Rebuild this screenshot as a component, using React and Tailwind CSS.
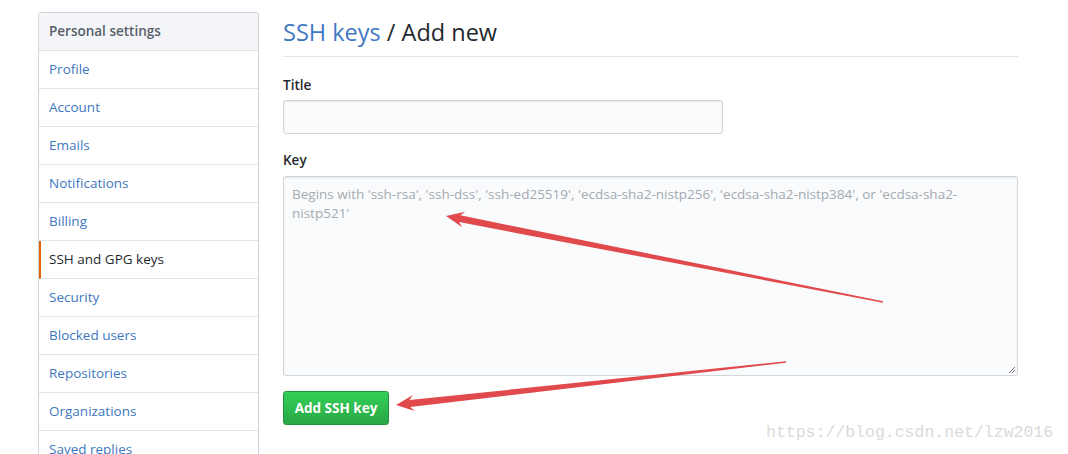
export default function App() {
  const items = [
    "Profile",
    "Account",
    "Emails",
    "Notifications",
    "Billing",
    "SSH and GPG keys",
    "Security",
    "Blocked users",
    "Repositories",
    "Organizations",
    "Saved replies",
  ];
  return (
    <div
      className="relative w-[1068px] h-[454px] overflow-hidden bg-white"
      style={{ fontFamily: '"Open Sans", "Noto Sans", sans-serif' }}
    >
      <div className="flex gap-[24px] pl-[38px] pt-[12px]">
        <nav className="w-[221px] shrink-0 border border-[#d1d5da] rounded-[3px] text-[14px]">
          <div className="h-[38px] flex items-center px-[10px] bg-[#f3f5f8] border-b border-[#e1e4e8] text-[#586069] font-semibold rounded-t-[3px] text-[13.5px]">
            Personal settings
          </div>
          {items.map((it) => {
            const active = it === "SSH and GPG keys";
            return (
              <div
                key={it}
                className={
                  active
                    ? "h-[38px] flex items-center px-[8px] border-b border-[#e1e4e8] border-l-2 border-l-[#e36209] text-[#24292e] font-medium text-[13.5px]"
                    : "h-[38px] flex items-center px-[10px] border-b border-[#e1e4e8] text-[#4078c0] text-[13.5px]"
                }
              >
                {it}
              </div>
            );
          })}
        </nav>
        <main className="w-[735px] shrink-0">
          <div className="border-b border-[#e1e4e8] pt-[3px] pb-[7px]">
            <h1 className="text-[23.5px] leading-[34px] text-[#24292e] font-normal">
              <span className="text-[#4078c0]">SSH keys</span> / Add new
            </h1>
          </div>
          <div className="mt-[18px] text-[13.5px] font-semibold text-[#24292e] leading-[20px]">
            Title
          </div>
          <div className="mt-[5px] w-[440px] h-[34px] bg-[#fafbfc] border border-[#d1d5da] rounded-[3px] shadow-[inset_0_1px_2px_rgba(27,31,35,0.075)]"></div>
          <div className="mt-[16px] text-[13.5px] font-semibold text-[#24292e] leading-[20px]">
            Key
          </div>
          <div className="relative mt-[6px] w-[735px] h-[200px] bg-[#fafbfc] border border-[#d1d5da] rounded-[3px] shadow-[inset_0_1px_2px_rgba(27,31,35,0.075)] px-[8px] pt-[8px] text-[13.5px] leading-[19px] text-[#a3aab1]">
            Begins with 'ssh-rsa', 'ssh-dss', 'ssh-ed25519', 'ecdsa-sha2-nistp256', 'ecdsa-sha2-nistp384', or 'ecdsa-sha2-nistp521'
            <svg className="absolute right-[1px] bottom-[1px]" width="9" height="9" viewBox="0 0 9 9">
              <path d="M8 2L2 8M8 5L5 8" stroke="#777" strokeWidth="1" />
            </svg>
          </div>
          <button className="mt-[15px] w-[106px] h-[34px] rounded-[3px] border border-[#25923f] bg-gradient-to-b from-[#34d058] to-[#28a745] text-white text-[13.5px] font-bold">
            Add SSH key
          </button>
        </main>
      </div>
      <svg className="absolute left-0 top-0 pointer-events-none" width="1068" height="454">
        <polygon
          fill="#e04a4c"
          points="446,216 465.2,211.7 460.4,215.3 883.1,301.3 882.9,302.7 459.0,222.1 462.2,227.3"
        />
        <polygon
          fill="#e04a4c"
          points="396,405 413.0,395.0 409.5,400.0 785.9,361.3 786.1,362.7 410.3,407.0 414.8,411.0"
        />
      </svg>
      <div
        className="absolute left-[766px] top-[422px] text-[16.5px] leading-[22px] text-[#dadada]"
        style={{ fontFamily: '"Liberation Mono", monospace' }}
      >
        https://blog.csdn.net/lzw2016
      </div>
    </div>
  );
}
